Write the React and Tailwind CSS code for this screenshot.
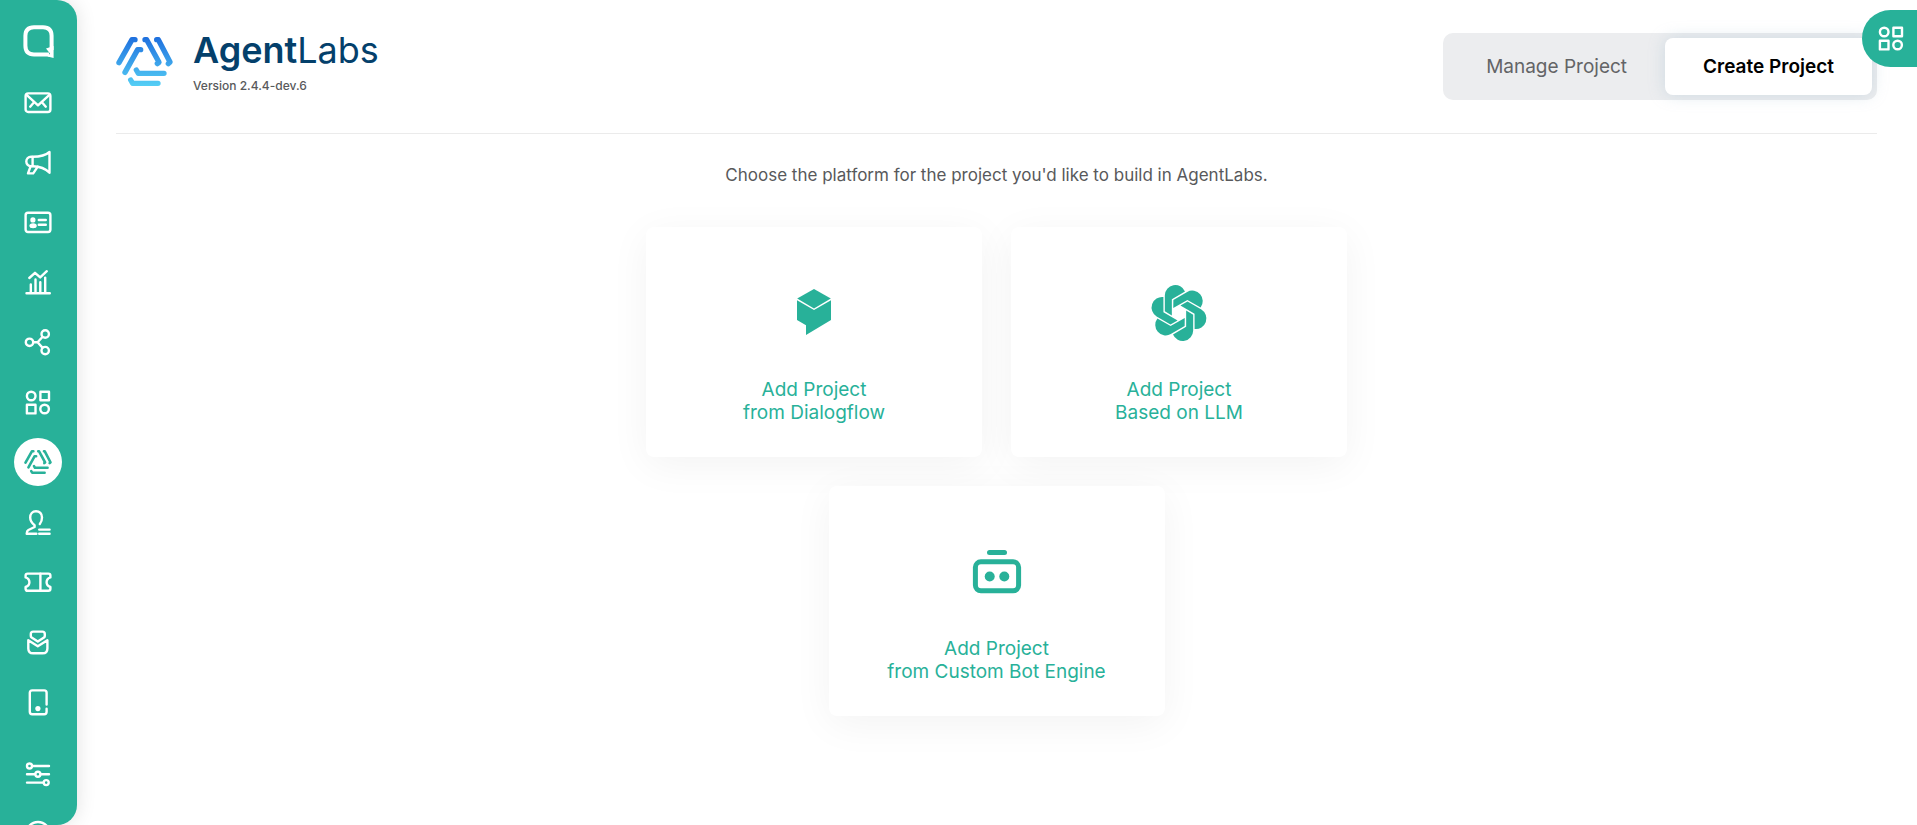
import { useState } from "react";

const Icon = ({ children }) => (
  <svg
    viewBox="0 0 28 28"
    className="w-7 h-7"
    fill="none"
    stroke="currentColor"
    strokeWidth="2.4"
    strokeLinecap="round"
    strokeLinejoin="round"
    aria-hidden="true"
  >
    {children}
  </svg>
);

const GridIcon = () => (
  <Icon>
    <circle cx="7.2" cy="8" r="4.3" />
    <rect x="16.4" y="3.7" width="8.6" height="8.6" />
    <rect x="2.9" y="16.8" width="8.6" height="8.6" />
    <circle cx="20.6" cy="21" r="4.3" />
  </Icon>
);

// AgentLabs mark, uses the gradient when one is given
const AgentLabsMark = ({ className, gradient }) => (
  <svg viewBox="0 0 171 147" className={className} aria-hidden="true">
    {gradient && (
      <defs>
        <linearGradient id="markFill" gradientUnits="userSpaceOnUse" x1="0" y1="0" x2="0" y2="147">
          <stop offset="0" stopColor="#1e6fde" />
          <stop offset="1" stopColor="#55cff5" />
        </linearGradient>
      </defs>
    )}
    <g
      fill="none"
      stroke={gradient ? "url(#markFill)" : "currentColor"}
      strokeWidth="16"
      strokeLinejoin="round"
      strokeLinecap="round"
    >
      <path d="M9 77L48 8H57" />
      <path d="M27 106L65 38H74" />
      <path d="M87 8H92L129 76L124 80" />
      <path d="M122 8H127L162 75L157 80" />
      <path d="M61 99L67 109H144" />
      <path d="M44 129L50 139H126" />
    </g>
  </svg>
);

const menu = [
  {
    label: "Inbox",
    icon: (
      <Icon>
        <rect x="1.6" y="5.4" width="24.8" height="18.6" rx="2.6" />
        <path d="M2.6 6.8L14 17.3L25.4 6.8M6.2 18.7L9.6 14.8M21.8 18.7L18.4 14.8" />
      </Icon>
    ),
  },
  {
    label: "Broadcast",
    icon: (
      <Icon>
        <path d="M25.5 4V24.8C21.5 20.5 16 18.3 8.8 18.2H7A4.7 4.7 0 0 1 7 8.8H8.8C16 8.7 21.5 7.5 25.5 4Z" />
        <path d="M8.6 9V18M6.5 18.6L4 25.4H9.2L13.6 18.8" />
      </Icon>
    ),
  },
  {
    label: "Contacts",
    icon: (
      <Icon>
        <rect x="1.6" y="4.8" width="24.8" height="19.2" rx="2.4" />
        <circle cx="8.9" cy="11.9" r="2.6" fill="currentColor" stroke="none" />
        <ellipse cx="9.1" cy="17.8" rx="3.7" ry="2.5" fill="currentColor" stroke="none" />
        <path d="M14.8 12H21.8M14.8 16.8H21.8" />
      </Icon>
    ),
  },
  {
    label: "Analytics",
    icon: (
      <Icon>
        <path d="M2.5 25.3H25.8M6.8 16.5V25M11.5 11.4V25M16.3 14.2V25M21.2 9.6V25" />
        <path d="M5.3 10L11 4.8L16.2 9.4L22.8 3.2" />
      </Icon>
    ),
  },
  {
    label: "Integration",
    icon: (
      <Icon>
        <circle cx="5.5" cy="14.3" r="3.7" />
        <circle cx="21.2" cy="6" r="3.7" />
        <circle cx="21.2" cy="22.6" r="3.7" />
        <path d="M9.5 14.3H13.6L18.4 9M13.6 14.3L18.4 19.6" />
      </Icon>
    ),
  },
  { label: "App Center", icon: <GridIcon /> },
  { label: "AgentLabs", active: true, icon: <AgentLabsMark className="w-7 h-6" /> },
  {
    label: "Agents",
    icon: (
      <Icon>
        <path d="M15.8 16C17.3 14.2 18 12.2 18 9.6C18 5.6 15.6 3.3 12 3.3S6.2 5.6 6.2 9.6C6.2 13.4 8 15.3 10.6 17.2V19L4.4 22C3 22.8 2.7 24 2.7 25.8H12.4" />
        <path d="M15.2 21.6H25.6M15.2 25.7H25.6" />
      </Icon>
    ),
  },
  {
    label: "Tickets",
    icon: (
      <Icon>
        <path d="M3.6 5.6H24.4Q26.4 5.6 26.4 7.6V9.4Q22.6 10.6 22.6 14.2T26.4 19V20.8Q26.4 22.8 24.4 22.8H3.6Q1.6 22.8 1.6 20.8V19Q5.4 17.8 5.4 14.2T1.6 9.4V7.6Q1.6 5.6 3.6 5.6Z" />
        <path d="M16.4 5.6V22.8" />
      </Icon>
    ),
  },
  {
    label: "Forms",
    icon: (
      <Icon>
        <path d="M6.8 8V6Q6.8 3.6 9.2 3.6H18.4Q20.8 3.6 20.8 6V8Q20.8 9 20 9.6L13.8 13.6L7.6 9.6Q6.8 9 6.8 8Z" />
        <path d="M4.3 12.3L13.8 18.2L23.4 12.3V20.4Q23.4 25.2 18.6 25.2H9.1Q4.3 25.2 4.3 20.4Z" />
      </Icon>
    ),
  },
  {
    label: "Devices",
    icon: (
      <Icon>
        <path d="M22.6 16.6V4.8Q22.6 2.4 20.2 2.4H8.2Q5.8 2.4 5.8 4.8V23.8Q5.8 26.2 8.2 26.2H20.2Q22.6 26.2 22.6 23.8V20.8" />
        <circle cx="13.9" cy="20.6" r="2.6" fill="currentColor" stroke="none" />
      </Icon>
    ),
  },
];

const footerMenu = [
  {
    label: "Settings",
    icon: (
      <Icon>
        <circle cx="5.5" cy="6" r="2.5" />
        <circle cx="13.9" cy="14.3" r="2.5" />
        <circle cx="22.2" cy="22.6" r="2.5" />
        <path d="M8.6 6H25M3 14.3H10.8M17 14.3H25M3 22.6H19" />
      </Icon>
    ),
  },
  {
    label: "Help",
    icon: (
      <Icon>
        <circle cx="14" cy="14" r="12" />
        <path d="M10.5 11A3.5 3.5 0 1 1 14 14.8V16.5M14 20V20.2" />
      </Icon>
    ),
  },
];

const petalAngles = [0, 60, 120, 180, 240, 300];

const platforms = [
  {
    lines: ["Add Project", "from Dialogflow"],
    icon: (
      <svg viewBox="0 0 60 60" className="w-15 h-15" fill="currentColor" aria-hidden="true">
        <path d="M30 6L46.8 15.6L30 25.4L13.2 15.6Z" />
        <path d="M13 17.2L30 27L47 17.2V37L22 52V42.2L13 37Z" />
      </svg>
    ),
  },
  {
    lines: ["Add Project", "Based on LLM"],
    icon: (
      <svg viewBox="-90 -90 180 180" className="w-15 h-15" fill="currentColor" aria-hidden="true">
        {petalAngles.map((a) => (
          <path
            key={a}
            transform={`rotate(${a})`}
            d="M-42.5 -53V-5L-21.5 7.5V-41.5L18 -64.5A31.5 31.5 0 0 0 -42.5 -53Z"
          />
        ))}
      </svg>
    ),
  },
  {
    lines: ["Add Project", "from Custom Bot Engine"],
    icon: (
      <svg viewBox="0 0 60 60" className="w-15 h-15" fill="currentColor" aria-hidden="true">
        <rect x="20" y="8" width="20" height="5" rx="2.5" />
        <rect x="8.4" y="19.8" width="43.2" height="29" rx="5.5" fill="none" stroke="currentColor" strokeWidth="5" />
        <circle cx="22.7" cy="34.5" r="5" />
        <circle cx="37.3" cy="34.5" r="5" />
      </svg>
    ),
  },
];

const tabs = ["Manage Project", "Create Project"];

function MenuButton({ item }) {
  return (
    <button
      type="button"
      aria-label={item.label}
      className={`w-12 h-12 shrink-0 rounded-full flex items-center justify-center ${
        item.active ? "bg-white text-[#28b199]" : "text-white"
      }`}
    >
      {item.icon}
    </button>
  );
}

function Sidebar() {
  return (
    <nav className="sticky top-0 w-[77px] h-screen shrink-0 overflow-hidden bg-[#28b199] rounded-r-[20px] shadow-[0_0_20px_rgba(0,0,0,0.12)] flex flex-col items-center gap-3 pt-6 pr-px">
      <a href="#home" aria-label="Home" className="mb-2 text-white">
        <svg viewBox="0 0 33 34" className="w-[33px] h-[34px]" aria-hidden="true">
          <path
            d="M27 30.4H12Q3.4 30.4 3.4 21.8V11.8Q3.4 3.2 12 3.2H21Q29.6 3.2 29.6 11.8V26"
            fill="none"
            stroke="currentColor"
            strokeWidth="4"
          />
          <path d="M24 24.6L31.6 22V34L25.5 32.4L28 29.5Z" fill="currentColor" />
        </svg>
      </a>
      {menu.map((item) => (
        <MenuButton key={item.label} item={item} />
      ))}
      <div className="mt-3 flex flex-col gap-3">
        {footerMenu.map((item) => (
          <MenuButton key={item.label} item={item} />
        ))}
      </div>
    </nav>
  );
}

export default function App() {
  const [tab, setTab] = useState("Create Project");

  return (
    <div className="min-h-screen flex bg-white font-['Inter',sans-serif]">
      <Sidebar />

      <main className="flex-1 pl-[39px] pr-10">
        <header className="flex items-start justify-between pt-[33px] pb-[33px] border-b border-[#ebebeb]">
          <div className="flex items-start gap-5">
            <AgentLabsMark gradient className="w-[57px] h-[49px] mt-1" />
            <div>
              <h1 className="text-4xl leading-[34px] text-[#04406b]">
                <span className="font-semibold">Agent</span>Labs
              </h1>
              <p className="mt-[11px] text-xs font-medium text-[#58595b]">Version 2.4.4-dev.6</p>
            </div>
          </div>

          <div role="tablist" className="flex p-[5px] rounded-[10px] bg-[#ecedef]">
            {tabs.map((name) => (
              <button
                key={name}
                type="button"
                role="tab"
                aria-selected={tab === name}
                onClick={() => setTab(name)}
                className={`h-[57px] px-[38px] pt-0.5 rounded-lg text-[19px] ${
                  tab === name
                    ? "bg-white text-black font-semibold shadow-[0_0_16px_rgba(150,180,200,0.35)]"
                    : "text-[#636466]"
                }`}
              >
                {name}
              </button>
            ))}
          </div>
        </header>

        <p className="mt-[27px] text-center text-[17px] leading-7 text-[#58595b]">
          Choose the platform for the project you'd like to build in AgentLabs.
        </p>

        {/* Platforms */}
        <div className="mt-[38px] mx-auto max-w-[720px] flex flex-wrap justify-center gap-[29px]">
          {platforms.map((p) => (
            <button
              key={p.lines[1]}
              type="button"
              className="w-[336px] pt-14 pb-[33px] rounded-lg bg-white text-[#28b199] flex flex-col items-center shadow-[0_8px_40px_rgba(0,0,0,0.05)]"
            >
              {p.icon}
              <span className="mt-[35px] text-[19px] leading-[23px]">
                {p.lines[0]}
                <br />
                {p.lines[1]}
              </span>
            </button>
          ))}
        </div>
      </main>

      <button
        type="button"
        aria-label="Open apps"
        className="fixed top-[10px] right-0 w-[55px] h-[57px] pl-[15px] pb-0.5 rounded-l-full bg-[#28b199] text-white flex items-center"
      >
        <GridIcon />
      </button>
    </div>
  );
}
